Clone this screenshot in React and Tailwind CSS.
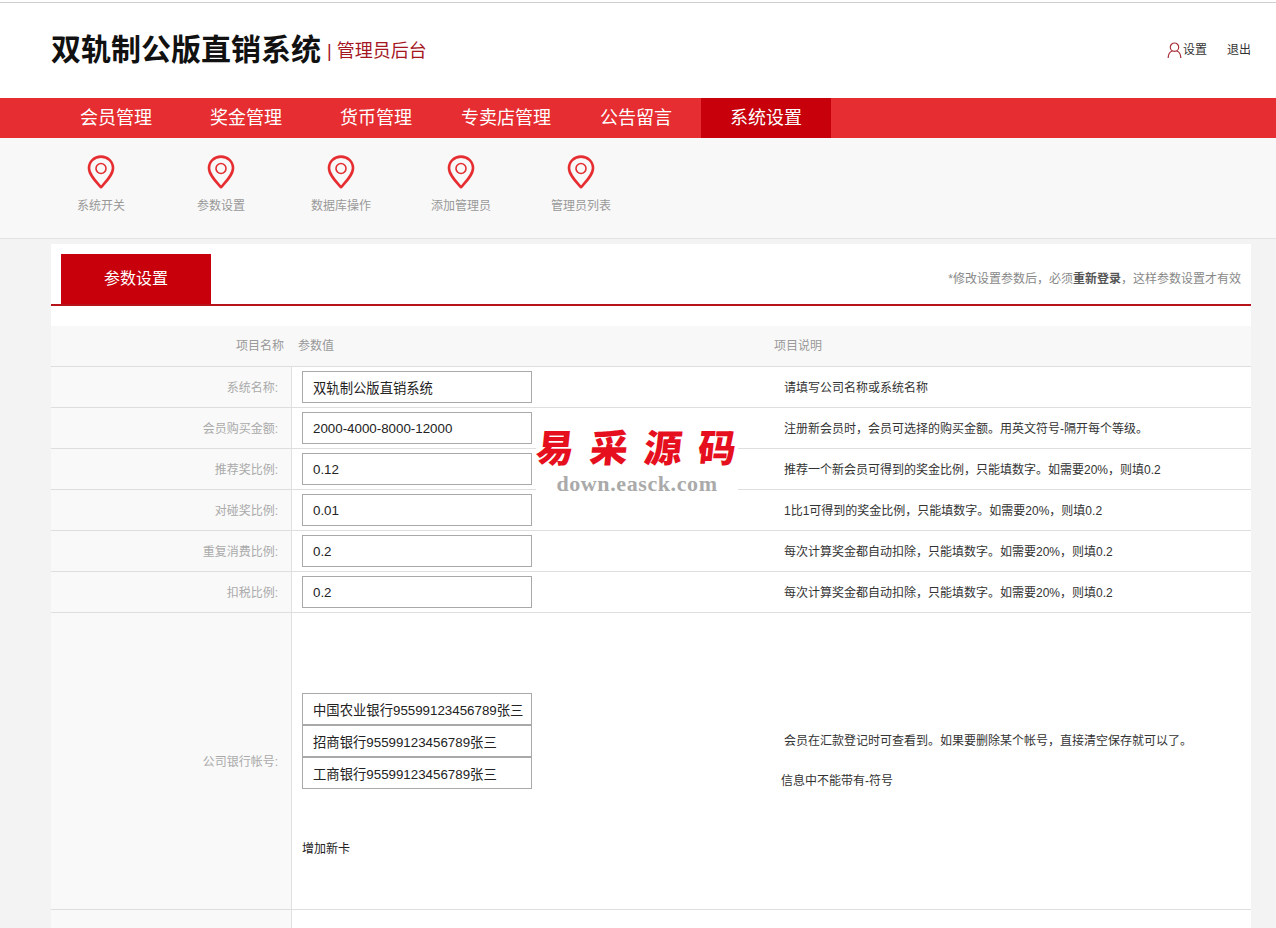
const font = { fontFamily: '"Liberation Sans", "Noto Sans CJK SC", sans-serif' };

function Pin() {
  return (
    <svg width="28" height="34" viewBox="0 0 28 34" fill="none" className="block">
      <path d="M14 32.2C8.5 26 2 19.5 2 13.2 2 6.6 7.4 1.6 14 1.6S26 6.6 26 13.2C26 19.5 19.5 26 14 32.2Z" stroke="#e62d31" strokeWidth="2.6" strokeLinejoin="round" />
      <circle cx="14" cy="13.5" r="5" stroke="#e62d31" strokeWidth="1.6" />
    </svg>
  );
}

function UserIcon() {
  return (
    <svg width="15" height="16" viewBox="0 0 15 16" fill="none" className="block">
      <circle cx="7.5" cy="5.2" r="4.2" stroke="#a8323a" strokeWidth="1.2" />
      <path d="M1.2 15.6C1.4 12 3.4 9.6 5.2 9M13.8 15.6C13.6 12 11.6 9.6 9.8 9" stroke="#a8323a" strokeWidth="1.2" strokeLinecap="round" />
    </svg>
  );
}

function Field({ value }) {
  return (
    <input
      readOnly
      value={value}
      className="block w-[230px] h-[32px] border border-[#a9a9a9] bg-white pl-[10px] pr-0 text-[13.33px] text-[#222] outline-none"
      style={font}
    />
  );
}

function Row({ label, value, desc }) {
  return (
    <div className="flex h-[41px] border-b border-[#dedede]">
      <div className="w-[241px] shrink-0 bg-[#f9f9f9] border-r border-[#e0e0e0] pr-[13px] flex items-center justify-end text-[12px] text-[#aaa] pt-[1px]">
        {label}
      </div>
      <div className="w-[482px] shrink-0 pl-[10px] pt-[4px]">
        <Field value={value} />
      </div>
      <div className="flex-1 pl-[10px] flex items-center text-[12px] text-[#333] pt-[1px]">{desc}</div>
    </div>
  );
}

const nav = ["会员管理", "奖金管理", "货币管理", "专卖店管理", "公告留言", "系统设置"];
const sub = ["系统开关", "参数设置", "数据库操作", "添加管理员", "管理员列表"];
const rows = [
  ["系统名称:", "双轨制公版直销系统", "请填写公司名称或系统名称"],
  ["会员购买金额:", "2000-4000-8000-12000", "注册新会员时，会员可选择的购买金额。用英文符号-隔开每个等级。"],
  ["推荐奖比例:", "0.12", "推荐一个新会员可得到的奖金比例，只能填数字。如需要20%，则填0.2"],
  ["对碰奖比例:", "0.01", "1比1可得到的奖金比例，只能填数字。如需要20%，则填0.2"],
  ["重复消费比例:", "0.2", "每次计算奖金都自动扣除，只能填数字。如需要20%，则填0.2"],
  ["扣税比例:", "0.2", "每次计算奖金都自动扣除，只能填数字。如需要20%，则填0.2"],
];

export default function App() {
  return (
    <div className="relative h-[928px] overflow-hidden bg-[#f3f3f3]" style={font}>
      <div className="h-[98px] bg-white pt-[2px]">
        <div className="h-[1px] bg-[#cfcfcf]" />
        <div className="h-[95px] px-[25px] pl-[51px] flex items-center justify-between pb-[2px]">
          <div className="flex items-center">
            <span className="text-[30px] leading-none font-bold text-[#111]">双轨制公版直销系统</span>
            <span className="text-[18px] leading-none text-[#a5161f] ml-[6px] pt-[3px]">| 管理员后台</span>
          </div>
          <div className="flex items-center text-[12px] text-[#333]">
            <UserIcon />
            <span className="ml-[1px]">设置</span>
            <span className="ml-[20px]">退出</span>
          </div>
        </div>
      </div>

      <div className="h-[40px] bg-[#e62d31] pl-[51px] flex">
        {nav.map((n, i) => (
          <div
            key={n}
            className={
              i === 5
                ? "w-[130px] flex items-center justify-center text-[18px] text-white bg-[#c7000b]"
                : "w-[130px] flex items-center justify-center text-[18px] text-white"
            }
          >
            {n}
          </div>
        ))}
      </div>

      <div className="h-[101px] bg-[#f8f8f8] border-b border-[#e3e3e3] pl-[41px] flex">
        {sub.map((s) => (
          <div key={s} className="w-[120px] flex flex-col items-center pt-[17px]">
            <Pin />
            <span className="text-[12px] text-[#999] mt-[8px]">{s}</span>
          </div>
        ))}
      </div>

      <div className="mt-[5px] ml-[51px] w-[1200px] bg-white h-[684px]">
        <div className="h-[62px] pt-[10px] pl-[10px] pr-[10px] border-b-2 border-[#b5121b] flex justify-between">
          <div className="w-[150px] h-[50px] bg-[#c7000b] flex items-center justify-center text-[16px] text-white">
            参数设置
          </div>
          <div className="h-[50px] flex items-center text-[12px] text-[#888]">
            *修改设置参数后，必须<span className="font-bold text-[#555]">重新登录</span>，这样参数设置才有效
          </div>
        </div>

        <div className="h-[20px]" />

        <div className="h-[41px] bg-[#f8f8f8] border-b border-[#dedede] flex items-center text-[12px] text-[#999]">
          <div className="w-[233px] text-right">项目名称</div>
          <div className="w-[476px] pl-[14px]">参数值</div>
          <div className="pl-[14px]">项目说明</div>
        </div>

        {rows.map((r) => (
          <Row key={r[0]} label={r[0]} value={r[1]} desc={r[2]} />
        ))}

        <div className="flex h-[297px] border-b border-[#dedede]">
          <div className="w-[241px] shrink-0 bg-[#f9f9f9] border-r border-[#e0e0e0] pr-[13px] flex items-center justify-end text-[12px] text-[#aaa] pt-[1px]">
            公司银行帐号:
          </div>
          <div className="w-[482px] shrink-0 pl-[10px] pt-[80px]">
            <Field value="中国农业银行95599123456789张三" />
            <Field value="招商银行95599123456789张三" />
            <Field value="工商银行95599123456789张三" />
            <div className="mt-[52px] text-[12px] leading-[16px] text-[#222]">增加新卡</div>
          </div>
          <div className="flex-1 pt-[120px] text-[12px] text-[#333] leading-[16px]">
            <div className="pl-[10px]">会员在汇款登记时可查看到。如果要删除某个帐号，直接清空保存就可以了。</div>
            <div className="pl-[7px] mt-[24px]">信息中不能带有-符号</div>
          </div>
        </div>

        <div className="flex h-[19px]">
          <div className="w-[241px] shrink-0 bg-[#f9f9f9] border-r border-[#e0e0e0]" />
        </div>
      </div>

      <div className="absolute left-[536px] top-[426px] w-[202px] h-[72px] bg-white flex flex-col items-center">
        <div className="text-[38px] leading-[46px] font-black text-[#e60f1e] tracking-[16px] pl-[14px] whitespace-nowrap -skew-x-6">
          易采源码
        </div>
        <div className="text-[22px] leading-[24px] font-bold text-[#aaa] tracking-[0.6px] whitespace-nowrap" style={{ fontFamily: '"Liberation Serif", serif' }}>
          down.easck.com
        </div>
      </div>
    </div>
  );
}
